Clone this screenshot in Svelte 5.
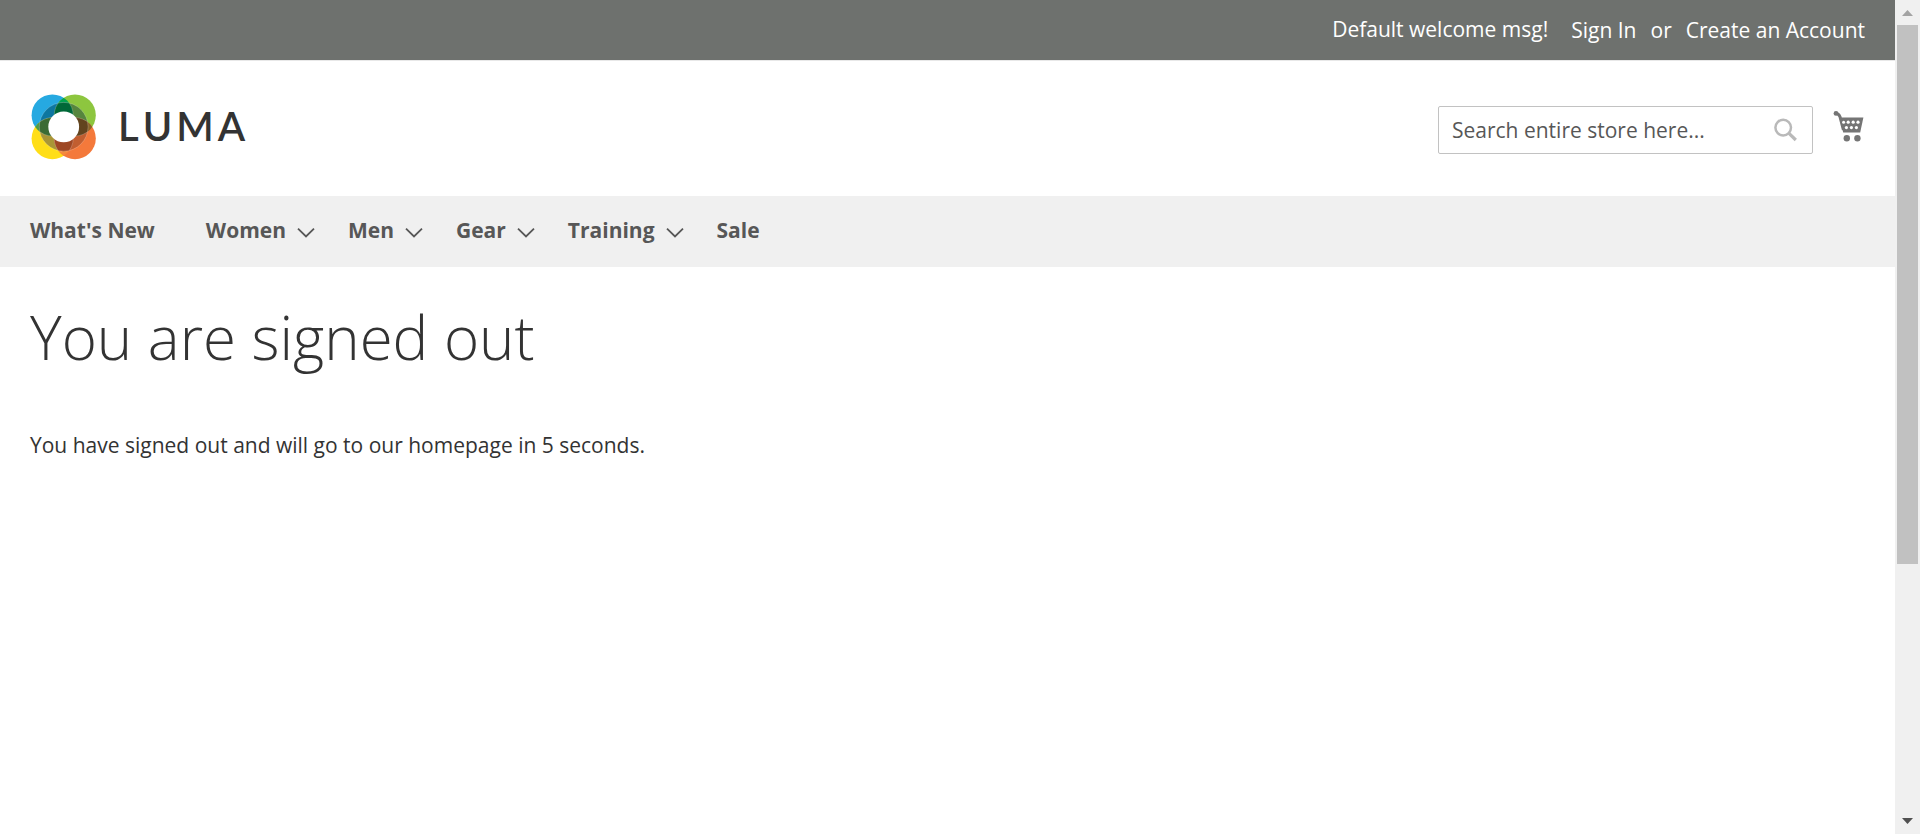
<script>
  const menu = [
    { label: "What's New", children: false },
    { label: 'Women', children: true },
    { label: 'Men', children: true },
    { label: 'Gear', children: true },
    { label: 'Training', children: true },
    { label: 'Sale', children: false }
  ];
  let query = $state('');
</script>

<svelte:head><title>You are signed out</title></svelte:head>

<div class="shell">
  <div class="page">
    <header>
      <div class="panel">
        <span class="welcome">Default welcome msg!</span>
        <div class="account">
          <a href="#signin">Sign In</a>
          <span>or</span>
          <a href="#create">Create an Account</a>
        </div>
      </div>
      <div class="bar">
        <a class="logo" href="#home" aria-label="Luma">
          <svg class="mark" width="66" height="66" viewBox="0 0 66 66" aria-hidden="true">
            <defs>
              <clipPath id="blue"><circle cx="21.4" cy="21.2" r="20.8" /></clipPath>
              <clipPath id="orange"><circle cx="44" cy="44.4" r="20.8" /></clipPath>
              <clipPath id="ring"><circle cx="32.7" cy="32.8" r="24.4" /></clipPath>
            </defs>
            <circle cx="21.4" cy="21.2" r="20.8" fill="#26a9e1" />
            <circle cx="44" cy="21.2" r="20.8" fill="#8dc63f" />
            <circle cx="21.4" cy="44.4" r="20.8" fill="#ffde17" />
            <circle cx="44" cy="44.4" r="20.8" fill="#f4793b" />
            <g clip-path="url(#blue)"><circle cx="44" cy="21.2" r="20.8" fill="#00a24f" /></g>
            <g clip-path="url(#blue)"><circle cx="21.4" cy="44.4" r="20.8" fill="#4c9a4a" /></g>
            <g clip-path="url(#orange)"><circle cx="44" cy="21.2" r="20.8" fill="#8a6428" /></g>
            <g clip-path="url(#orange)"><circle cx="21.4" cy="44.4" r="20.8" fill="#f58a3c" /></g>
            <g clip-path="url(#ring)">
              <circle cx="21.4" cy="21.2" r="20.8" fill="#0d76a0" />
              <circle cx="44" cy="21.2" r="20.8" fill="#56853d" />
              <circle cx="21.4" cy="44.4" r="20.8" fill="#a99536" />
              <circle cx="44" cy="44.4" r="20.8" fill="#c15e30" />
              <g clip-path="url(#blue)"><circle cx="21.4" cy="44.4" r="20.8" fill="#3b6b34" /></g>
              <g clip-path="url(#orange)"><circle cx="44" cy="21.2" r="20.8" fill="#62441f" /></g>
              <g clip-path="url(#orange)"><circle cx="21.4" cy="44.4" r="20.8" fill="#9e4724" /></g>
              <g clip-path="url(#blue)"><circle cx="44" cy="21.2" r="20.8" fill="#006838" /></g>
            </g>
            <g fill="none" stroke="#fff" stroke-opacity=".3" stroke-width=".7">
              <circle cx="32.7" cy="32.8" r="24.4" />
              <g clip-path="url(#ring)">
                <circle cx="21.4" cy="21.2" r="20.8" />
                <circle cx="44" cy="21.2" r="20.8" />
                <circle cx="21.4" cy="44.4" r="20.8" />
                <circle cx="44" cy="44.4" r="20.8" />
              </g>
            </g>
            <circle cx="32.7" cy="32.8" r="15.4" fill="#fff" />
          </svg>
          <span class="word"><span>L</span><span>U</span><span>M</span><span>A</span></span>
        </a>
        <form class="search" role="search" onsubmit={(e) => e.preventDefault()}>
          <input type="text" aria-label="Search" placeholder="Search entire store here..." bind:value={query} />
          <button type="submit" aria-label="Search">
            <svg width="24" height="24" viewBox="0 0 24 24" fill="none" stroke="#b9b9b9" aria-hidden="true">
              <circle cx="10.2" cy="9.6" r="7.8" stroke-width="2.5" />
              <path d="M16 15.4L22.8 22" stroke-width="3.2" />
            </svg>
          </button>
        </form>
        <a class="cart" href="#cart" aria-label="My Cart">
          <svg width="32" height="32" viewBox="0 0 32 32" aria-hidden="true">
            <path d="M2.6 3.2C5 3.2 6 4.2 7 6.8L10.4 20" fill="none" stroke="#757575" stroke-width="3" />
            <circle cx="3" cy="3.4" r="2.4" fill="#757575" />
            <path d="M6.4 7.6H30.4L27.2 22.6H10.2Z" fill="#757575" />
            <g fill="#fff">
              <circle cx="10.6" cy="12.2" r="1.5" /><circle cx="15.2" cy="12.2" r="1.6" /><circle cx="20.2" cy="12.2" r="1.6" /><circle cx="25" cy="12.2" r="1.6" />
              <circle cx="13.4" cy="17.6" r="1.6" /><circle cx="18.4" cy="17.6" r="1.6" /><circle cx="23.4" cy="17.6" r="1.6" />
            </g>
            <circle cx="13.8" cy="28.2" r="3.2" fill="#757575" />
            <circle cx="24.4" cy="28.2" r="3.2" fill="#757575" />
          </svg>
        </a>
      </div>
    </header>

    <nav>
      <ul>
        {#each menu as item}
          <li>
            <a href="#menu" class:plain={!item.children}>
              {item.label}
              {#if item.children}
                <svg width="18" height="12" viewBox="0 0 18 12" fill="none" stroke="#575757" stroke-width="1.8" aria-hidden="true">
                  <path d="M1 1.6L9 9.4L17 1.6" />
                </svg>
              {/if}
            </a>
          </li>
        {/each}
      </ul>
    </nav>

    <main>
      <h1>You are signed out</h1>
      <p>You have signed out and will go to our homepage in 5 seconds.</p>
    </main>
  </div>

  <div class="scrollbar" aria-hidden="true">
    <svg class="arrow" width="25" height="25" viewBox="0 0 25 25"><path d="M7 16L12.5 10L18 16Z" fill="#a3a3a3" /></svg>
    <div class="thumb"></div>
    <div class="track"></div>
    <svg class="arrow" width="25" height="25" viewBox="0 0 25 25"><path d="M7 9L12.5 15L18 9Z" fill="#505050" /></svg>
  </div>
</div>

<style>
  :global(body) {
    margin: 0;
    background: #fff;
  }
  .shell {
    display: flex;
    font-family: 'Open Sans', sans-serif;
    font-size: 21px;
    line-height: 30px;
    color: #333;
  }
  .page {
    flex: 1;
    min-width: 0;
  }
  a {
    color: inherit;
    text-decoration: none;
  }
  .panel {
    display: flex;
    justify-content: flex-end;
    gap: 23px;
    padding: 14px 30px 16px;
    background: #6e716e;
    border-bottom: 1px solid #e8e8e8;
    color: #fff;
  }
  .account {
    display: flex;
    gap: 14px;
    padding-top: 1px;
    margin-bottom: -1px;
  }
  .bar {
    display: flex;
    align-items: flex-start;
    padding: 32px 30px 36px;
  }
  .logo {
    display: flex;
    align-items: center;
    gap: 21px;
    padding: 1px 0 0 1px;
    margin-right: auto;
    color: #333;
  }
  .mark {
    display: block;
  }
  .word {
    display: flex;
    gap: 4px;
    padding-bottom: 2px;
    font-family: Lato, sans-serif;
    font-size: 40px;
    font-weight: 600;
    line-height: 64px;
  }
  .search {
    display: flex;
    width: 375px;
    height: 48px;
    margin-top: 13px;
    box-sizing: border-box;
    border: 1px solid #c2c2c2;
    border-radius: 2px;
  }
  .search input {
    flex: 1;
    min-width: 0;
    padding: 0 0 0 13px;
    border: 0;
    outline: 0;
    background: none;
    font: inherit;
    color: #333;
  }
  .search input::placeholder {
    color: #575757;
    opacity: 1;
  }
  .search button {
    display: flex;
    align-items: center;
    padding: 0 15px;
    border: 0;
    background: none;
  }
  .cart {
    margin: 17px 0 0 20px;
  }
  .cart svg {
    display: block;
  }
  nav {
    background: #f0f0f0;
    color: #575757;
    font-weight: 700;
  }
  nav ul {
    display: flex;
    gap: 33px;
    margin: 0;
    padding: 19px 30px 22px;
    list-style: none;
  }
  nav a {
    display: flex;
    align-items: center;
    gap: 11px;
  }
  nav a svg {
    margin-top: 6px;
  }
  .plain {
    padding-right: 18px;
  }
  main {
    padding: 37px 30px;
  }
  h1 {
    margin: 0;
    font-size: 60px;
    line-height: 66px;
    font-weight: 300;
  }
  p {
    margin: 60px 0 0;
  }
  .scrollbar {
    position: sticky;
    top: 0;
    display: flex;
    flex-direction: column;
    width: 25px;
    height: 100vh;
    background: #f0f0f0;
  }
  .arrow {
    display: block;
    flex: none;
  }
  .thumb {
    flex: 539;
    margin: 0 2px;
    background: #c1c1c1;
  }
  .track {
    flex: 245;
  }
</style>
